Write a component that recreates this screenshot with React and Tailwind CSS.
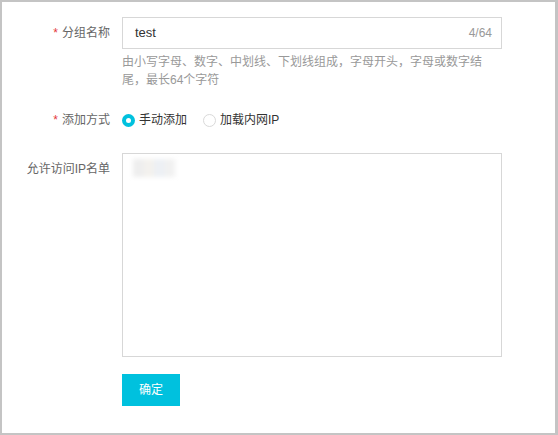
import React from 'react'

const font = { fontFamily: '"Liberation Sans", "Noto Sans CJK SC", sans-serif' }

const Label = ({ required, children }) => (
  <div className="w-[120px] shrink-0 pr-3 text-right text-[12px] text-[#666] leading-[18px]">
    {required && <span className="mr-1 text-[#e4393c]">*</span>}
    {children}
  </div>
)

const Radio = ({ checked, label }) => (
  <label className="flex items-center mr-4 cursor-pointer">
    {checked ? (
      <span className="w-[13px] h-[13px] rounded-full bg-[#00c1de] flex items-center justify-center">
        <span className="w-[5px] h-[5px] rounded-full bg-white" />
      </span>
    ) : (
      <span className="w-[13px] h-[13px] rounded-full border border-[#d9d9d9] bg-white box-border" />
    )}
    <span className="ml-[4px] text-[12px] text-[#333] leading-[18px]">{label}</span>
  </label>
)

export default function App() {
  return (
    <div style={font} className="w-[558px] h-[435px] bg-white border-2 border-r-[3px] border-[#c4c4c4] box-border">
      {/* 分组名称 */}
      <div className="flex items-center mt-[15px]">
        <Label required>分组名称</Label>
        <div className="w-[380px] h-[32px] border border-[#d7d7d7] flex items-center pl-3 pr-[9px] box-border">
          <span className="flex-1 text-[13px] text-[#333]">test</span>
          <span className="text-[12px] text-[#999]">4/64</span>
        </div>
      </div>
      <div className="flex mt-[4px]">
        <div className="w-[120px] shrink-0" />
        <p className="w-[380px] text-[12px] leading-[18px] text-[#999]">
          由小写字母、数字、中划线、下划线组成，字母开头，字母或数字结尾，最长64个字符
        </p>
      </div>

      {/* 添加方式 */}
      <div className="flex items-center mt-[21px] h-[20px]">
        <Label required>添加方式</Label>
        <div className="flex items-center">
          <Radio checked label="手动添加" />
          <Radio label="加载内网IP" />
        </div>
      </div>

      {/* 允许访问IP名单 */}
      <div className="flex items-start mt-[23px]">
        <div className="pt-[7px]">
          <Label>允许访问IP名单</Label>
        </div>
        <div className="w-[380px] h-[204px] border border-[#d7d7d7] box-border px-[10px] py-[5px]">
          <div className="w-[42px] h-[18px] flex blur-[2px]">
            <span className="flex-1 bg-[#eeeeee]" />
            <span className="flex-1 bg-[#f3f1ee]" />
            <span className="flex-1 bg-[#edf0f4]" />
            <span className="flex-1 bg-[#f1f1f1]" />
          </div>
        </div>
      </div>

      {/* 确定 */}
      <div className="flex mt-[17px]">
        <div className="w-[120px] shrink-0" />
        <button className="w-[58px] h-[32px] bg-[#00c1de] text-white text-[12px]">确定</button>
      </div>
    </div>
  )
}
